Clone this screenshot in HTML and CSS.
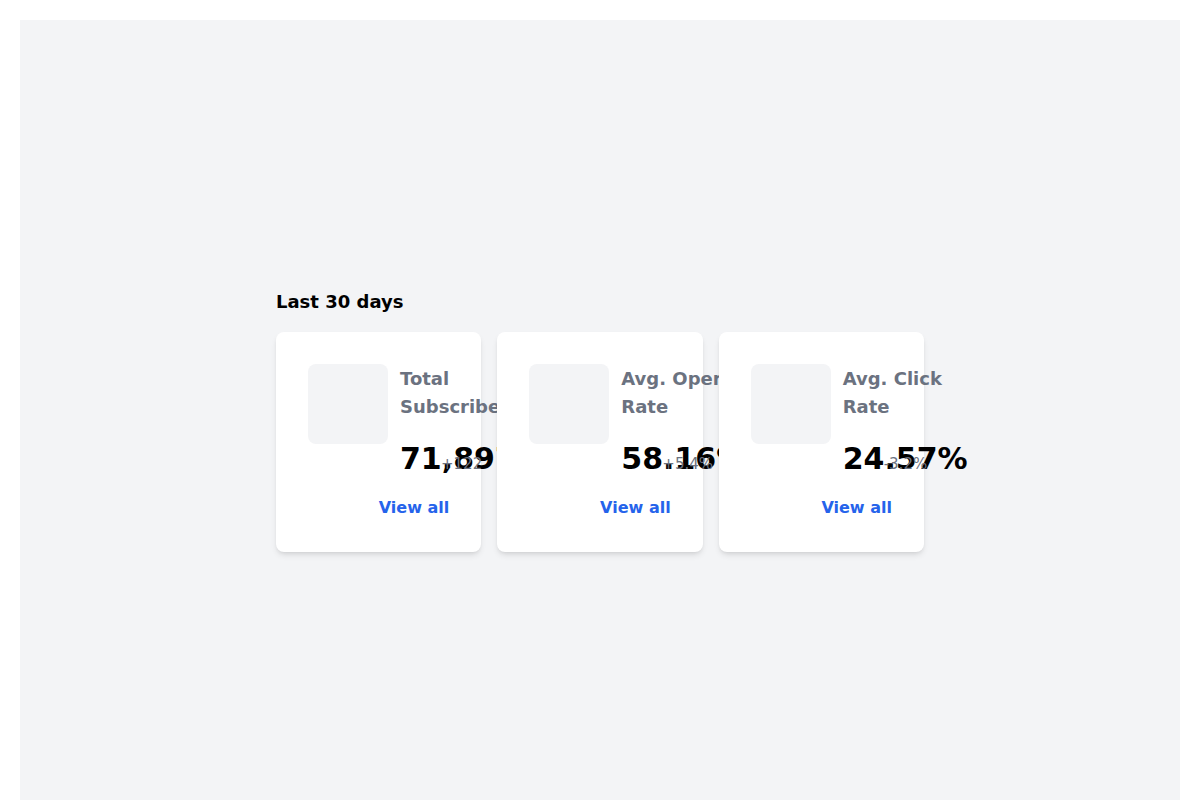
FILE: index.html
```html
<!DOCTYPE html>
<html lang="en">
<head>
<meta charset="utf-8">
<title>Last 30 days</title>
<link rel="stylesheet" href="styles.css">
</head>
<body>
<main class="panel">
  <section class="stats">
    <h3 class="stats-title">Last 30 days</h3>
    <dl class="cards">
      <div class="card">
        <div class="card-row">
          <div class="icon-box"></div>
          <div class="card-text">
            <dt class="label">Total Subscribers</dt>
            <dd class="figure">
              <span class="value">71,897</span>
              <span class="change">+122</span>
            </dd>
          </div>
        </div>
        <div class="card-foot"><a class="link" href="#">View all</a></div>
      </div>
      <div class="card">
        <div class="card-row">
          <div class="icon-box"></div>
          <div class="card-text">
            <dt class="label">Avg. Open Rate</dt>
            <dd class="figure">
              <span class="value">58.16%</span>
              <span class="change">+5.4%</span>
            </dd>
          </div>
        </div>
        <div class="card-foot"><a class="link" href="#">View all</a></div>
      </div>
      <div class="card">
        <div class="card-row">
          <div class="icon-box"></div>
          <div class="card-text">
            <dt class="label">Avg. Click Rate</dt>
            <dd class="figure">
              <span class="value">24.57%</span>
              <span class="change">-3.2%</span>
            </dd>
          </div>
        </div>
        <div class="card-foot"><a class="link" href="#">View all</a></div>
      </div>
    </dl>
  </section>
</main>
</body>
</html>
```

FILE: styles.css
```css
* { box-sizing: border-box; }

html, body {
  margin: 0;
  padding: 0;
  background: #ffffff;
}

body {
  padding: 20px 20px 0 20px;
  font-family: "DejaVu Sans", "Liberation Sans", sans-serif;
  color: #000;
}

.panel {
  min-height: 800px;
  background: #f3f4f6;
  display: flex;
  align-items: center;
  justify-content: center;
}

.stats {
  width: 648px;
}

.stats-title {
  margin: 0 0 16px 0;
  font-size: 18px;
  line-height: 28px;
  font-weight: 700;
  color: #000;
}

.cards {
  margin: 0;
  display: grid;
  grid-template-columns: repeat(3, 1fr);
  gap: 16px;
}

.card {
  background: #ffffff;
  border-radius: 8px;
  padding: 32px;
  box-shadow: 0 4px 6px -1px rgba(0, 0, 0, 0.1), 0 2px 4px -2px rgba(0, 0, 0, 0.1);
  min-width: 0;
}

.card-row {
  display: flex;
  align-items: flex-start;
  gap: 12px;
}

.icon-box {
  flex: 0 0 80px;
  width: 80px;
  height: 80px;
  border-radius: 8px;
  background: #f3f4f6;
}

.card-text {
  flex: 0 0 120px;
  width: 120px;
  padding-top: 1px;
}

.label {
  margin: 0;
  font-size: 18px;
  line-height: 28px;
  font-weight: 700;
  color: #6b7280;
}

.figure {
  margin: 20px 0 0 0;
  display: flex;
  align-items: baseline;
  white-space: nowrap;
}

.value {
  flex: 0 0 33px;
  width: 33px;
  font-size: 30px;
  line-height: 36px;
  font-weight: 700;
  color: #000;
}

.change {
  margin-left: 8px;
  font-size: 15px;
  line-height: 20px;
  font-weight: 400;
  color: #6b7280;
}

.card-foot {
  margin-top: 19px;
  display: flex;
  justify-content: flex-end;
}

.link {
  font-size: 16px;
  line-height: 24px;
  font-weight: 700;
  color: #2563eb;
  text-decoration: none;
}
```
